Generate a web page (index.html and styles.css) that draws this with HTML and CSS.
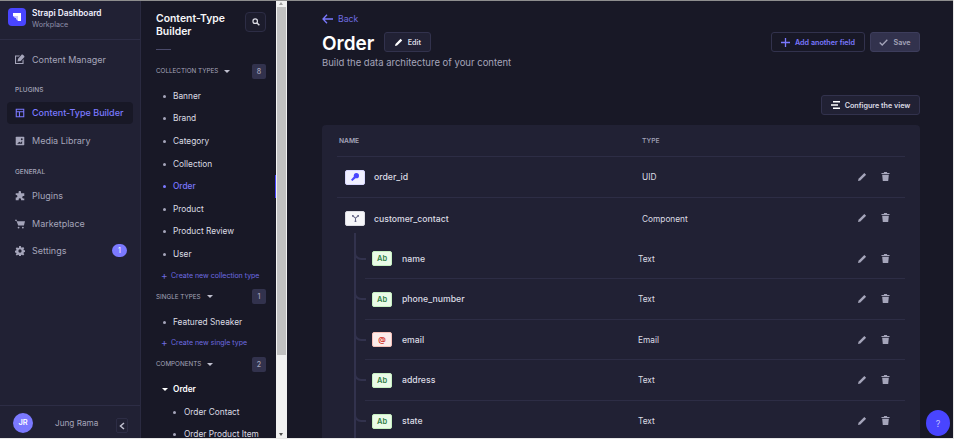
FILE: index.html
```html
<!DOCTYPE html>
<html lang="en">
<head>
    <meta charset="UTF-8">
    <meta name="viewport" content="width=device-width, initial-scale=1.0">
    <title>Content-Type Builder</title>
    <link rel="stylesheet" href="styles.css">
</head>
<body>
    <div class="app">
        <nav class="mainnav">
            <div class="brand">
                <div class="brand-logo">
                    <svg width="10" height="10" viewBox="0 0 10 10"><path d="M1 1h8v8H6V4H1z" fill="#fff"/><path d="M1 4h5v5L4 7V6H3z" fill="#c9c6ff"/></svg>
                </div>
                <div>
                    <div class="brand-name">Strapi Dashboard</div>
                    <div class="brand-sub">Workplace</div>
                </div>
            </div>
            <div class="nav-body">
                <a class="nav-item">
                    <svg class="nav-icon" viewBox="0 0 14 14"><path d="M0 2h7L5.500 3.500H1.500v9h9V9L12 7.500V14H0z" fill="#a5a5ba"/><path d="M3.500 10.500l.8-4L9.500.8c1-.8 4.500 2.400 3.700 3.500L8 9.700z" fill="#a5a5ba"/></svg>
                    Content Manager
                </a>
                <div class="nav-label nav-label-plugins">PLUGINS</div>
                <a class="nav-item nav-active">
                    <svg class="nav-icon" viewBox="0 0 14 14"><path d="M1 1h12v12H1zM2.500 2.500v2h9v-2zM2.500 6v5.500h3V6zM7 6v5.500h4.500V6z" fill="#7b79ff" fill-rule="evenodd"/></svg>
                    Content-Type Builder
                </a>
                <a class="nav-item nav-item-media">
                    <svg class="nav-icon" viewBox="0 0 14 14"><path d="M2 1h10a1 1 0 0 1 1 1v10a1 1 0 0 1-1 1H2a1 1 0 0 1-1-1V2a1 1 0 0 1 1-1z" fill="#a5a5ba"/><path d="M3 11l3-3 2 1.500L10 7v4z" fill="#212134"/><circle cx="9.500" cy="4.500" r="1.300" fill="#212134"/></svg>
                    Media Library
                </a>
                <div class="nav-label nav-label-general">GENERAL</div>
                <a class="nav-item">
                    <svg class="nav-icon" viewBox="0 0 14 14"><path d="M5 1.500a1.700 1.700 0 0 1 3.400 0V3H13v4h-1.500a1.800 1.800 0 0 0 0 3.500H13V13H8.500v-1a1.700 1.700 0 0 0-3.400 0v1H1V9h1a1.800 1.800 0 0 0 0-3.500H1V3h4z" fill="#a5a5ba"/></svg>
                    Plugins
                </a>
                <a class="nav-item nav-item-market">
                    <svg class="nav-icon" viewBox="0 0 14 14"><path d="M0 1h2.500L3 3h11l-1.500 6H4.500L2 2.500H0z" fill="#a5a5ba"/><circle cx="5" cy="12" r="1.300" fill="#a5a5ba"/><circle cx="11" cy="12" r="1.300" fill="#a5a5ba"/></svg>
                    Marketplace
                </a>
                <a class="nav-item nav-item-settings">
                    <svg class="nav-icon" viewBox="0 0 14 14"><path d="M5.800 0h2.400l.3 1.900 1.200.5 1.600-1.100 1.700 1.700-1.100 1.600.5 1.200 1.900.3v2.400l-1.900.3-.5 1.200 1.100 1.600-1.700 1.700-1.600-1.100-1.200.5-.3 1.900H5.800l-.3-1.900-1.200-.5-1.600 1.100L1 12.100l1.100-1.600-.5-1.200L-.3 9V6.600l1.900-.3.500-1.200L1 3.500l1.700-1.700 1.600 1.100 1.200-.5zM7 4.700a2.300 2.300 0 1 0 0 4.600 2.300 2.300 0 0 0 0-4.600z" fill="#a5a5ba" fill-rule="evenodd"/></svg>
                    Settings
                    <span class="nav-badge">1</span>
                </a>
            </div>
            <div class="profile">
                <span class="avatar">JR</span>
                <span class="profile-name">Jung Rama</span>
                <span class="collapse">
                    <svg width="6" height="8" viewBox="0 0 6 8"><path d="M5 1L1.500 4 5 7" fill="none" stroke="#c0c0cf" stroke-width="1.500"/></svg>
                </span>
            </div>
        </nav>

        <aside class="subnav">
            <div class="subnav-head">
                <h2>Content-Type Builder</h2>
                <button class="search-btn">
                    <svg width="8" height="8" viewBox="0 0 10 10"><circle cx="4" cy="4" r="2.800" fill="none" stroke="#dcdce4" stroke-width="1.500"/><path d="M6 6l3.200 3.200" stroke="#dcdce4" stroke-width="1.800"/></svg>
                </button>
            </div>
            <div class="subnav-rule"></div>

            <div class="section section-first"><span>COLLECTION TYPES</span><i class="caret"></i><b class="count">8</b></div>
            <ul class="links">
                <li>Banner</li>
                <li>Brand</li>
                <li>Category</li>
                <li>Collection</li>
                <li class="current">Order</li>
                <li>Product</li>
                <li>Product Review</li>
                <li>User</li>
            </ul>
            <a class="create">Create new collection type</a>

            <div class="section"><span>SINGLE TYPES</span><i class="caret"></i><b class="count">1</b></div>
            <ul class="links">
                <li>Featured Sneaker</li>
            </ul>
            <a class="create">Create new single type</a>

            <div class="section"><span>COMPONENTS</span><i class="caret"></i><b class="count">2</b></div>
            <ul class="links">
                <li class="group">Order</li>
                <li class="child">Order Contact</li>
                <li class="child">Order Product Item</li>
            </ul>
            <div class="current-mark"></div>
        </aside>

        <div class="scrollbar">
            <div class="scroll-up"></div>
            <div class="scroll-thumb"></div>
            <div class="scroll-down"></div>
        </div>

        <main class="content">
            <a class="back">
                <svg width="11" height="10" viewBox="0 0 11 10"><path d="M5 .8L1 5l4 4.200M1.200 5H11" fill="none" stroke="#7b79ff" stroke-width="1.300"/></svg>
                Back
            </a>
            <div class="title-row">
                <div class="title-left">
                    <h1>Order</h1>
                    <button class="btn btn-edit">
                        <svg class="pen" viewBox="0 0 10 10"><path d="M0 10l.6-2.600L7 1l2 2-6.400 6.400z" fill="#fff"/></svg>
                        Edit
                    </button>
                </div>
                <div class="title-right">
                    <button class="btn btn-add">
                        <svg width="9" height="9" viewBox="0 0 9 9"><path d="M4.500 0v9M0 4.500h9" stroke="#7b79ff" stroke-width="1.300"/></svg>
                        Add another field
                    </button>
                    <button class="btn btn-save">
                        <svg width="9" height="7" viewBox="0 0 9 7"><path d="M.7 3.500L3.200 6 8.300.8" fill="none" stroke="#a5a5ba" stroke-width="1.300"/></svg>
                        Save
                    </button>
                </div>
            </div>
            <p class="subtitle">Build the data architecture of your content</p>
            <div class="view-row">
                <button class="btn btn-view">
                    <svg width="9" height="8" viewBox="0 0 9 8"><path d="M2 0h7v1.500H2zM0 3.200h7v1.500H0zM2 6.400h7V8H2z" fill="#fff"/></svg>
                    Configure the view
                </button>
            </div>

            <section class="card">
                <div class="card-head">
                    <span class="col-name">NAME</span>
                    <span class="col-type">TYPE</span>
                </div>
                <div class="row">
                    <span class="chip chip-uid"><svg width="8" height="8" viewBox="0 0 9 9"><path d="M6 0a3 3 0 0 1 0 6l-.9-.2L1.500 9 0 7.600l3.200-3.700A3 3 0 0 1 6 0z" fill="#4945ff"/></svg></span>
                    <span class="field">order_id</span>
                    <span class="type">UID</span>
                    <span class="actions"><svg class="act" viewBox="0 0 10 10"><path d="M0 10l.6-2.600L7 1l2 2-6.400 6.400z"/></svg><svg class="act act-trash" viewBox="0 0 10 10"><path d="M3.500 0h3l.5 1h2.500v1.200H.5V1H3zM1.300 3h7.400L8 10H2z"/></svg></span>
                </div>
                <div class="row row-parent">
                    <span class="chip chip-comp"><svg width="7" height="7" viewBox="0 0 9 9"><path d="M1 1l3.500 3L8 1M4.500 4v4" fill="none" stroke="#666687" stroke-width="1.300"/><circle cx="1" cy="1" r="1.200" fill="#666687"/><circle cx="8" cy="1" r="1.200" fill="#666687"/><circle cx="4.500" cy="8" r="1.200" fill="#666687"/></svg></span>
                    <span class="field">customer_contact</span>
                    <span class="type">Component</span>
                    <span class="actions"><svg class="act" viewBox="0 0 10 10"><path d="M0 10l.6-2.600L7 1l2 2-6.400 6.400z"/></svg><svg class="act act-trash" viewBox="0 0 10 10"><path d="M3.500 0h3l.5 1h2.500v1.200H.5V1H3zM1.300 3h7.400L8 10H2z"/></svg></span>
                </div>
                <div class="nested">
                    <div class="row row-sub">
                        <span class="chip chip-text">Ab</span>
                        <span class="field">name</span>
                        <span class="type">Text</span>
                        <span class="actions"><svg class="act" viewBox="0 0 10 10"><path d="M0 10l.6-2.600L7 1l2 2-6.400 6.400z"/></svg><svg class="act act-trash" viewBox="0 0 10 10"><path d="M3.500 0h3l.5 1h2.500v1.200H.5V1H3zM1.300 3h7.400L8 10H2z"/></svg></span>
                    </div>
                    <div class="row row-sub">
                        <span class="chip chip-text">Ab</span>
                        <span class="field">phone_number</span>
                        <span class="type">Text</span>
                        <span class="actions"><svg class="act" viewBox="0 0 10 10"><path d="M0 10l.6-2.600L7 1l2 2-6.400 6.400z"/></svg><svg class="act act-trash" viewBox="0 0 10 10"><path d="M3.500 0h3l.5 1h2.500v1.200H.5V1H3zM1.300 3h7.400L8 10H2z"/></svg></span>
                    </div>
                    <div class="row row-sub">
                        <span class="chip chip-email">@</span>
                        <span class="field">email</span>
                        <span class="type">Email</span>
                        <span class="actions"><svg class="act" viewBox="0 0 10 10"><path d="M0 10l.6-2.600L7 1l2 2-6.400 6.400z"/></svg><svg class="act act-trash" viewBox="0 0 10 10"><path d="M3.500 0h3l.5 1h2.500v1.200H.5V1H3zM1.300 3h7.400L8 10H2z"/></svg></span>
                    </div>
                    <div class="row row-sub">
                        <span class="chip chip-text">Ab</span>
                        <span class="field">address</span>
                        <span class="type">Text</span>
                        <span class="actions"><svg class="act" viewBox="0 0 10 10"><path d="M0 10l.6-2.600L7 1l2 2-6.400 6.400z"/></svg><svg class="act act-trash" viewBox="0 0 10 10"><path d="M3.500 0h3l.5 1h2.500v1.200H.5V1H3zM1.300 3h7.400L8 10H2z"/></svg></span>
                    </div>
                    <div class="row row-sub">
                        <span class="chip chip-text">Ab</span>
                        <span class="field">state</span>
                        <span class="type">Text</span>
                        <span class="actions"><svg class="act" viewBox="0 0 10 10"><path d="M0 10l.6-2.600L7 1l2 2-6.400 6.400z"/></svg><svg class="act act-trash" viewBox="0 0 10 10"><path d="M3.500 0h3l.5 1h2.500v1.200H.5V1H3zM1.300 3h7.400L8 10H2z"/></svg></span>
                    </div>
                </div>
            </section>
            <button class="help">?</button>
        </main>
    </div>
</body>
</html>
```

FILE: styles.css
```css
* {
    box-sizing: border-box;
}
html, body {
    margin: 0;
    padding: 0;
    height: 439px;
    overflow: hidden;
}
body {
    font-family: Inter, "Liberation Sans", sans-serif;
    font-size: 9px;
    background: #e8e8e8;
    color: #dcdce4;
}
button {
    font-family: inherit;
}
.app {
    display: flex;
    height: 438px;
    margin-right: 1px;
    overflow: hidden;
    border-top: 1px solid #8e8e8e;
}

/* left nav */
.mainnav {
    width: 141px;
    flex: none;
    display: flex;
    flex-direction: column;
    background: #212134;
    border-right: 1px solid #2a2a40;
}
.brand {
    display: flex;
    align-items: flex-start;
    gap: 6px;
    height: 39px;
    padding: 7px 8px 0;
    border-bottom: 1px solid #2d2d45;
}
.brand-logo {
    width: 18px;
    height: 18px;
    border-radius: 4px;
    background: #4945ff;
    display: flex;
    align-items: center;
    justify-content: center;
}
.brand-name {
    font-size: 8.300px;
    font-weight: 600;
    line-height: 11px;
    color: #f0f0ff;
}
.brand-sub {
    font-size: 7.200px;
    line-height: 11px;
    color: #8e8ea9;
}
.nav-body {
    flex: 1;
    padding: 8px 7px 0;
}
.nav-item {
    display: flex;
    align-items: center;
    gap: 7px;
    height: 22px;
    padding: 0 8px;
    font-size: 9px;
    color: #a5a5ba;
    white-space: nowrap;
}
.nav-icon {
    width: 10px;
    height: 10px;
    flex: none;
}
.nav-active {
    background: #181826;
    color: #7b79ff;
    border-radius: 4px;
    font-weight: 500;
    margin-top: 7px;
}
.nav-item-media {
    margin-top: 6px;
}
.nav-item-market {
    margin-top: 6px;
}
.nav-item-settings {
    margin-top: 5px;
}
.nav-label {
    font-size: 6.500px;
    font-weight: 500;
    line-height: 9px;
    padding-left: 8px;
    color: #a5a5ba;
}
.nav-label-plugins {
    margin-top: 15.500px;
}
.nav-label-general {
    margin-top: 16px;
    margin-bottom: 8px;
}
.nav-badge {
    margin-left: auto;
    margin-right: -2px;
    width: 15px;
    height: 13px;
    border-radius: 7px;
    background: #7b79ff;
    color: #fff;
    font-size: 7px;
    line-height: 13px;
    text-align: center;
}
.profile {
    display: flex;
    align-items: flex-start;
    height: 33px;
    padding: 7px 12px 0 13px;
    border-top: 1px solid #2d2d45;
}
.avatar {
    width: 20px;
    height: 20px;
    border-radius: 50%;
    background: #7b79ff;
    color: #fff;
    font-size: 7.500px;
    font-weight: 600;
    line-height: 20px;
    text-align: center;
}
.profile-name {
    margin-left: 22px;
    font-size: 8.200px;
    line-height: 20px;
    color: #a5a5ba;
}
.collapse {
    margin-left: auto;
    margin-top: 5px;
    width: 12px;
    height: 15px;
    border: 1px solid #2d2d45;
    border-radius: 2px;
    display: flex;
    align-items: center;
    justify-content: center;
}

/* content types list */
.subnav {
    position: relative;
    width: 135px;
    flex: none;
    background: #181826;
    padding: 0 10px 0 15px;
    overflow: hidden;
}
.subnav-head {
    display: flex;
    justify-content: space-between;
    padding-top: 11px;
}
.subnav-head h2 {
    margin: 0;
    width: 80px;
    font-size: 10.400px;
    font-weight: 600;
    line-height: 13px;
    color: #f6f6f9;
}
.search-btn {
    width: 21px;
    height: 20px;
    padding: 0;
    background: #1c1c2c;
    border: 1px solid #2d2d45;
    border-radius: 4px;
    display: flex;
    align-items: center;
    justify-content: center;
}
.subnav-rule {
    width: 15px;
    height: 1px;
    margin-top: 11px;
    background: #4a4a6a;
}
.section {
    display: flex;
    align-items: center;
    height: 15px;
    font-size: 6.300px;
    color: #a5a5ba;
    margin-top: 3.500px;
}
.section-first {
    margin-top: 13.500px;
}
.caret {
    width: 0;
    height: 0;
    margin-left: 6px;
    border: 3px solid transparent;
    border-top: 3px solid #c0c0cf;
    border-bottom: 0;
}
.count {
    margin-left: auto;
    width: 14px;
    height: 15px;
    border-radius: 2px;
    background: #32324d;
    color: #a5a5ba;
    font-size: 7px;
    font-weight: 500;
    line-height: 15px;
    text-align: center;
}
.links {
    list-style: none;
    margin: 6.400px 0 0;
    padding: 0;
}
.links li {
    position: relative;
    height: 22.600px;
    line-height: 22.600px;
    padding-left: 17px;
    font-size: 8.300px;
    color: #dcdce4;
    white-space: nowrap;
}
.links li::before {
    content: "";
    position: absolute;
    left: 7px;
    top: 10px;
    width: 3px;
    height: 3px;
    border-radius: 50%;
    background: #a5a5ba;
}
.links .current {
    color: #7b79ff;
    font-weight: 500;
}
.links .current::before {
    background: #7b79ff;
}
.links .group {
    font-weight: 600;
    color: #fff;
}
.links .group::before {
    left: 6px;
    top: 10px;
    width: 0;
    height: 0;
    border-radius: 0;
    background: none;
    border: 3px solid transparent;
    border-top: 3px solid #fff;
    border-bottom: 0;
}
.links .child {
    padding-left: 28px;
}
.links .child::before {
    left: 17px;
}
.create {
    display: block;
    position: relative;
    height: 20px;
    line-height: 20px;
    padding-left: 15px;
    font-size: 7px;
    color: #6e6be0;
    white-space: nowrap;
}
.create::before {
    content: "+";
    position: absolute;
    left: 5px;
    top: -1px;
    font-size: 10px;
}
.current-mark {
    position: absolute;
    right: 0;
    top: 174px;
    width: 1px;
    height: 23px;
    background: #4945ff;
}

/* fake browser scrollbar */
.scrollbar {
    width: 11px;
    flex: none;
    display: flex;
    flex-direction: column;
    background: #f1f1f1;
}
.scroll-up, .scroll-down {
    height: 6px;
    flex: none;
    position: relative;
}
.scroll-up::after, .scroll-down::after {
    content: "";
    position: absolute;
    left: 3px;
    top: 1px;
    border: 2.500px solid transparent;
}
.scroll-up::after {
    border-top: 0;
    border-bottom: 3px solid #a0a0a0;
}
.scroll-down::after {
    border-bottom: 0;
    border-top: 3px solid #505050;
}
.scroll-thumb {
    height: 348px;
    margin: 0 1px;
    background: #c1c1c1;
}
.scroll-down {
    margin-top: auto;
}

/* main column */
.content {
    position: relative;
    flex: 1;
    min-width: 0;
    background: #181826;
    padding: 11px 33px 0 35px;
    overflow: hidden;
}
.back {
    display: flex;
    align-items: center;
    gap: 5px;
    height: 14px;
    font-size: 8.700px;
    color: #6e6be0;
}
.title-row {
    display: flex;
    justify-content: space-between;
    align-items: flex-start;
    margin-top: 6px;
    height: 22px;
}
.title-left, .title-right {
    display: flex;
    align-items: flex-start;
}
.title-right {
    gap: 5px;
}
.title-row h1 {
    margin: 1px 10px 0 0;
    font-size: 19px;
    font-weight: 600;
    line-height: 22px;
    color: #fff;
}
.btn {
    display: flex;
    align-items: center;
    justify-content: center;
    height: 20px;
    padding: 0;
    border: 1px solid #32324d;
    border-radius: 3px;
    background: #212134;
    font-size: 7.200px;
    font-weight: 600;
    color: #dcdce4;
    gap: 5px;
}
.pen {
    width: 8px;
    height: 8px;
}
.btn-edit {
    width: 47px;
    color: #dcdce4;
}
.btn-add {
    width: 94px;
    background: #181826;
    color: #7b79ff;
}
.btn-save {
    width: 50px;
    background: #32324d;
    border-color: #3d3d5c;
    color: #a5a5ba;
}
.subtitle {
    margin: 2px 0 0;
    font-size: 9.500px;
    line-height: 14px;
    color: #a5a5ba;
}
.view-row {
    display: flex;
    justify-content: flex-end;
    margin-top: 25px;
}
.btn-view {
    width: 99px;
}
.card {
    margin-top: 10px;
    background: #212134;
    border-radius: 4px;
    padding: 0 15px;
}
.card-head {
    display: flex;
    align-items: center;
    height: 32px;
    font-size: 6.700px;
    font-weight: 600;
    color: #a5a5ba;
    border-bottom: 1px solid #2d2d45;
}
.col-name {
    padding-left: 2px;
    width: 305px;
}
.col-type {
    font-weight: 500;
}
.row {
    position: relative;
    display: flex;
    align-items: center;
    height: 41px;
    border-bottom: 1px solid #2d2d45;
    padding-left: 8px;
    font-size: 8.700px;
}
.row-parent {
    border-bottom: 0;
}
.chip {
    flex: none;
    width: 20px;
    height: 15px;
    border-radius: 2px;
    display: flex;
    align-items: center;
    justify-content: center;
    font-size: 7.500px;
    font-weight: 600;
}
.chip-uid {
    background: #f0f0ff;
    border: 1px solid #d9d8ff;
}
.chip-comp {
    background: #f6f6f9;
    border: 1px solid #dcdce4;
}
.chip-text {
    background: #eafbe7;
    border: 1px solid #c6f0c2;
    color: #328048;
}
.chip-email {
    background: #fcecea;
    border: 1px solid #f5c0b8;
    color: #d02b20;
}
.field {
    margin-left: 9px;
    width: 268px;
    font-weight: 500;
    color: #dcdce4;
}
.row-sub .field {
    margin-left: 10px;
    width: 236px;
}
.type {
    font-size: 8.300px;
    color: #dcdce4;
}
.actions {
    position: absolute;
    right: 15px;
    top: 15px;
    display: flex;
    gap: 14px;
}
.act {
    width: 9px;
    height: 9px;
    fill: #a5a5ba;
}
.nested {
    position: relative;
    margin-left: 17px;
}
.nested::before {
    content: "";
    position: absolute;
    left: 0;
    top: -6px;
    bottom: 0;
    width: 2px;
    background: #32324d;
}
.row-sub {
    margin-left: 11px;
    padding-left: 7px;
}
.row-sub:nth-child(1), .row-sub:nth-child(3) {
    height: 40px;
}
.row-sub::before {
    content: "";
    position: absolute;
    left: -11px;
    top: 9px;
    width: 10px;
    height: 10px;
    border-left: 2px solid #32324d;
    border-bottom: 2px solid #32324d;
    border-bottom-left-radius: 7px;
}
.help {
    position: absolute;
    right: 3px;
    bottom: 2px;
    width: 24px;
    height: 26px;
    padding: 0;
    border: 0;
    border-radius: 50%;
    background: #4945ff;
    color: #c0c0ff;
    font-size: 9px;
}
```
